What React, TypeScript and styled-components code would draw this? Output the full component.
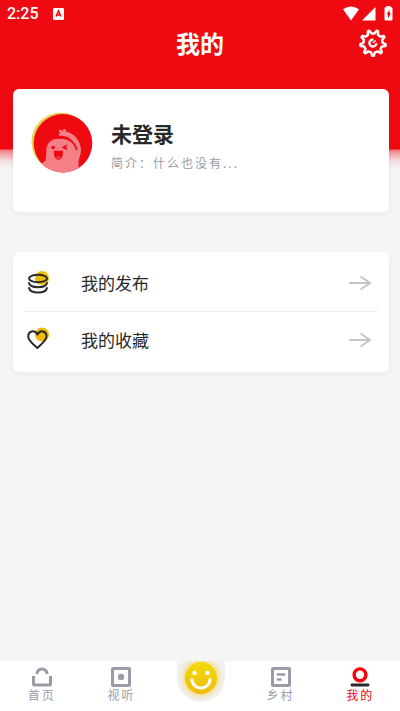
import React from "react";
import styled, { createGlobalStyle } from "styled-components";

const GlobalStyle = createGlobalStyle`
  * { box-sizing: border-box; }
  body {
    margin: 0;
    background: #f5f5f5;
    font-family: "Noto Sans CJK SC", "Noto Sans", sans-serif;
  }
  button { border: 0; padding: 0; background: none; font: inherit; color: inherit; cursor: pointer; }
  a { color: inherit; text-decoration: none; }
  svg { display: block; flex: none; }
`;

const Page = styled.div`
  display: flex;
  flex-direction: column;
  min-height: 100vh;
  background: linear-gradient(
      #ee0a10 0, #ee0a10 149px, #f0777c 150px, #f2a5a8 154px, #f3dcdd 161px, #f5f5f5 168px
    ) no-repeat #f5f5f5;
`;

const StatusBar = styled.div`
  display: flex;
  align-items: center;
  height: 28px;
  padding: 0 7px;
  color: #fff;
`;

const Clock = styled.time`
  font: 500 16px/28px Roboto, sans-serif;
  margin-right: 14px;
`;

const StatusIcons = styled.div`
  display: flex;
  align-items: center;
  margin-left: auto;
`;

const Header = styled.header`
  display: grid;
  grid-template-columns: 1fr auto 1fr;
  align-items: center;
  height: 30px;
  padding: 0 12px;
  color: #fff;
`;

const Title = styled.h1`
  grid-column: 2;
  margin: 0;
  font-size: 24px;
  line-height: 30px;
  font-weight: 700;
`;

const SettingsButton = styled.button`
  justify-self: end;
`;

const Main = styled.main`
  flex: 1;
  display: flex;
  flex-direction: column;
  gap: 40px;
  padding: 31px 11px 24px 13px;
`;

const Card = styled.section`
  background: #fff;
  border-radius: 6px;
  box-shadow: 0 2px 6px rgba(0, 0, 0, 0.05);
`;

const ProfileCard = styled(Card)`
  display: flex;
  align-items: flex-start;
  gap: 16px;
  min-height: 123px;
  padding: 22px 16px;
`;

const ProfileText = styled.div`
  padding-top: 7px;
`;

const Name = styled.h2`
  margin: 0;
  color: #292929;
  font-size: 21px;
  line-height: 30px;
  font-weight: 700;
`;

const Bio = styled.p`
  margin: 5px 0 0;
  color: #999ba5;
  font-size: 12px;
  line-height: 20px;
  letter-spacing: 2px;
`;

const MenuCard = styled(Card)`
  padding: 2px 11px 4px;
`;

const MenuItem = styled.button`
  display: flex;
  align-items: center;
  width: 100%;
  height: 57px;
  padding: 0 6px 0 2px;
  text-align: left;

  & + & {
    border-top: 1px solid #eee;
  }
`;

const MenuLabel = styled.span`
  flex: 1;
  margin-left: 31px;
  color: #292929;
  font-size: 17px;
  line-height: 24px;
`;

const TabBar = styled.nav`
  position: sticky;
  bottom: 0;
  display: grid;
  grid-template-columns: repeat(5, 1fr);
  height: 50px;
  padding-left: 2px;
  background: #fff;
`;

const Tab = styled.a<{ $active?: boolean }>`
  display: flex;
  flex-direction: column;
  align-items: center;
  padding-top: 6px;
  color: ${({ $active }) => ($active ? "#f5000b" : "#999ba7")};
`;

const TabLabel = styled.span`
  font-size: 12px;
  line-height: 16px;
  letter-spacing: 2px;
  white-space: nowrap;
`;

const SmileTab = styled.a`
  justify-self: center;
  display: flex;
  justify-content: center;
  width: 48px;
  height: 41px;
  padding-top: 1px;
  border-radius: 0 0 24px 24px;
  background: radial-gradient(circle at 50% 17px, #f3d76c 14px, #f2e7bc 18px, #f1f0ea 22px, #f1f1f2 25px);
`;

const gearPath = (() => {
  const teeth = 9;
  const points: string[] = [];
  for (let i = 0; i < teeth; i++) {
    const middle = Math.PI / 2 + (i * 2 * Math.PI) / teeth;
    [[-0.2, 9.6], [-0.06, 12.8], [0.06, 12.8], [0.2, 9.6]].forEach(([turn, r]) => {
      const x = 15 + r * Math.cos(middle + turn);
      const y = 15 + r * Math.sin(middle + turn);
      points.push(`${x.toFixed(2)} ${y.toFixed(2)}`);
    });
  }
  return `M${points.join("L")}Z`;
})();

const Gear = () => (
  <svg width="30" height="30" viewBox="0 0 30 30" fill="none" stroke="#fff">
    <path d={gearPath} strokeWidth="2.5" strokeLinejoin="round" />
    <path d="M15.5 11.6A3.5 3.5 0 1 0 18.4 15.2" strokeWidth="2.3" />
    <path d="M15 15L17.6 12.4" strokeWidth="1.4" />
  </svg>
);

const KeyboardBadge = () => (
  <svg width="11" height="12" viewBox="0 0 11 12">
    <rect width="11" height="12" rx="1.2" fill="#fff" />
    <path d="M3 8.5L5.5 3L8 8.5M4 7H7" fill="none" stroke="#ee0a10" strokeWidth="1.6" />
  </svg>
);

const Signals = () => (
  <svg width="52" height="16" viewBox="0 0 52 16" fill="#fff">
    <path d="M2 3.2Q10 -2.2 18 3.2L10 14.5Z" />
    <path d="M34.5 1V14.5H21Z" />
    <path d="M45.5 0H49.5V1.3H50.5Q51.5 1.3 51.5 2.3V13.5Q51.5 14.5 50.5 14.5H44.5Q43.5 14.5 43.5 13.5V2.3Q43.5 1.3 44.5 1.3H45.5Z" />
    <path d="M48.5 3.5L45.5 8.5H47V12.5L50 7.3H48.5Z" fill="#ee0a10" />
  </svg>
);

const Avatar = () => (
  <svg width="66" height="64" viewBox="0 0 66 64" role="img" aria-label="头像">
    <defs>
      <clipPath id="avatarDisc"><circle cx="34" cy="32.3" r="29.3" /></clipPath>
    </defs>
    <circle cx="31.8" cy="31" r="29.3" fill="#e8d04a" />
    <circle cx="34" cy="32.3" r="29.3" fill="#ee0a10" />
    <g clipPath="url(#avatarDisc)">
      <path
        d="M9 64L10.5 54L16.5 49.5Q17.3 46 17.3 40C17.3 32.5 22 27.8 29 27.8C36 27.8 41 29 44.5 33L48 38V64Z"
        fill="#f57f86"
      />
      <path
        d="M33 24.8L30.5 25L29.3 22.8L31.5 21.7L29.3 20L31 18.6L33.7 20L34.5 18L36.5 18.2L37 20.5L40 21.5C47 24 51.5 31 52 38.5C52.3 44 49 48 49.5 52L50 64H43L42 40L47.5 39.5C46.8 33 42.5 27.5 37.5 25.7Z"
        fill="#f57f86"
      />
      <path d="M33 26C39 26.5 46.5 31.5 47.5 39" fill="none" stroke="#ee0a10" strokeWidth="1.7" />
      <circle cx="24.2" cy="36.5" r="1.8" fill="#ee0a10" />
      <path d="M38 34L34 36.5L38 38.3M34 36.5L37.5 36.2" fill="none" stroke="#ee0a10" strokeWidth="1.3" />
      <path d="M24.8 39.8H34C34 45.2 32.7 48.7 29.4 48.7C26 48.7 24.8 45.2 24.8 39.8Z" fill="#ee0a10" />
      <path d="M27 46.5Q29.5 44 32 46.5Q29.5 49 27 46.5" fill="#f57f86" opacity="0.45" />
      <path d="M12 53.5Q16.5 54.5 15.5 59" fill="none" stroke="#ee0a10" strokeWidth="0.9" />
    </g>
  </svg>
);

const Coins = () => (
  <svg width="24" height="26" viewBox="0 0 24 26" fill="none" stroke="#292929" strokeWidth="2">
    <circle cx="16" cy="8" r="7" fill="#f0ba08" stroke="none" />
    <ellipse cx="12" cy="8.5" rx="9" ry="3.7" />
    <path d="M3 13C4 18.5 20 18.5 21 13M3 18C4.5 24 19.5 24 21 18" strokeLinecap="round" />
  </svg>
);

const Heart = () => (
  <svg width="24" height="26" viewBox="0 0 24 26">
    <circle cx="16" cy="7.5" r="7" fill="#f0ba08" />
    <path
      d="M11.5 7.5C8.5 2 2.2 4.5 2.2 9.5C2.2 13.5 7 17 11.3 21C15.5 17 20.5 13.5 20.5 9.5C20.5 4.5 14.5 2 11.5 7.5Z"
      fill="none" stroke="#292929" strokeWidth="2" strokeLinejoin="round"
    />
  </svg>
);

const Arrow = () => (
  <svg width="24" height="16" viewBox="0 0 24 16" fill="none" stroke="#c5c6ca" strokeWidth="2">
    <path d="M1 8H22M12.5 1.5L22 8L12.5 14.5" />
  </svg>
);

const HomeIcon = () => (
  <svg width="20" height="20" viewBox="0 0 20 20" fill="none" stroke="currentColor" strokeWidth="3">
    <path d="M1.5 9V17Q1.5 18 2.5 18H17.5Q18.5 18 18.5 17V9" />
    <path d="M4.8 7C6 .4 14 .4 15.2 7" />
  </svg>
);

const VideoIcon = () => (
  <svg width="20" height="20" viewBox="0 0 20 20" fill="none" stroke="currentColor" strokeWidth="3">
    <rect x="1.5" y="1.5" width="17" height="17" rx="0.6" />
    <circle cx="10" cy="10" r="3.2" fill="currentColor" stroke="none" />
  </svg>
);

const VillageIcon = () => (
  <svg width="20" height="20" viewBox="0 0 20 20" fill="none" stroke="currentColor" strokeWidth="3">
    <rect x="1.5" y="1.5" width="17" height="17" rx="0.6" />
    <path d="M6.8 7.5H13.2M6.8 12.5H9.5" strokeLinecap="round" strokeWidth="2.4" />
  </svg>
);

const MineIcon = () => (
  <svg width="20" height="20" viewBox="0 0 20 20" fill="none">
    <circle cx="10" cy="7.8" r="5.9" stroke="#f5000b" strokeWidth="3.4" />
    <rect x="0.5" y="16.5" width="19" height="3" rx="1.4" fill="#292929" />
  </svg>
);

const Smile = () => (
  <svg width="32" height="32" viewBox="0 0 32 32">
    <defs>
      <linearGradient id="smileFill" x1="0" y1="0" x2="0" y2="1">
        <stop offset="0" stopColor="#f3db0c" />
        <stop offset="1" stopColor="#f0bb0b" />
      </linearGradient>
    </defs>
    <circle cx="16" cy="16" r="16" fill="url(#smileFill)" />
    <circle cx="9.5" cy="11" r="2.2" fill="#fff" />
    <circle cx="22.5" cy="11" r="2.2" fill="#fff" />
    <path d="M6.8 16.5C7 29 25 29 25.2 16.5" fill="none" stroke="#fff" strokeWidth="3" />
  </svg>
);

const menu = [
  { label: "我的发布", Icon: Coins },
  { label: "我的收藏", Icon: Heart },
];

export default function App() {
  return (
    <Page>
      <GlobalStyle />
      <StatusBar>
        <Clock>2:25</Clock>
        <KeyboardBadge />
        <StatusIcons><Signals /></StatusIcons>
      </StatusBar>
      <Header>
        <Title>我的</Title>
        <SettingsButton aria-label="设置"><Gear /></SettingsButton>
      </Header>
      <Main>
        <ProfileCard>
          <Avatar />
          <ProfileText>
            <Name>未登录</Name>
            <Bio>简介：什么也没有...</Bio>
          </ProfileText>
        </ProfileCard>
        <MenuCard>
          {menu.map(({ label, Icon }) => (
            <MenuItem key={label}>
              <Icon />
              <MenuLabel>{label}</MenuLabel>
              <Arrow />
            </MenuItem>
          ))}
        </MenuCard>
      </Main>
      <TabBar>
        <Tab href="#home"><HomeIcon /><TabLabel>首页</TabLabel></Tab>
        <Tab href="#video"><VideoIcon /><TabLabel>视听</TabLabel></Tab>
        <SmileTab href="#smile" aria-label="发布"><Smile /></SmileTab>
        <Tab href="#village"><VillageIcon /><TabLabel>乡村</TabLabel></Tab>
        <Tab href="#mine" $active aria-current="page"><MineIcon /><TabLabel>我的</TabLabel></Tab>
      </TabBar>
    </Page>
  );
}
